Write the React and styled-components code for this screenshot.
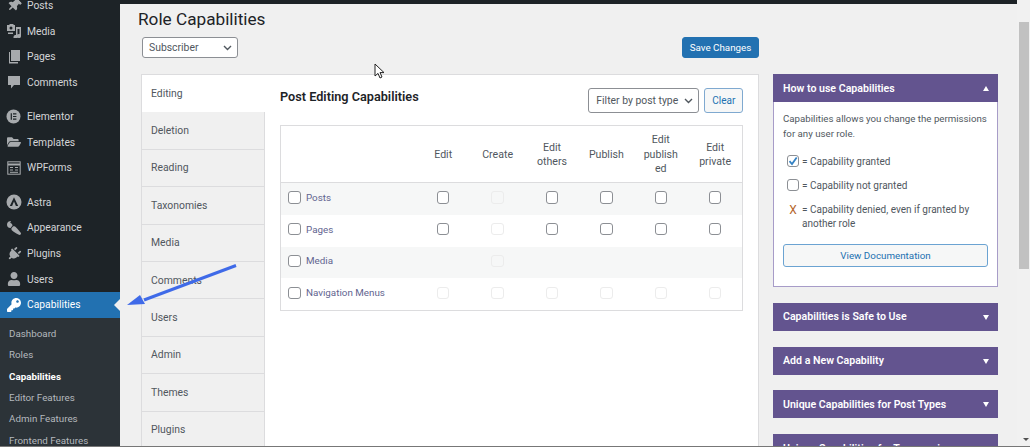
import React from "react";
import styled, { createGlobalStyle } from "styled-components";
import { FaThumbtack, FaFolderOpen, FaPaintBrush, FaPlug, FaUser, FaKey } from "react-icons/fa";

const GlobalStyle = createGlobalStyle`
  html, body {
    margin: 0;
    padding: 0;
    background: #f0f0f0;
    overflow: hidden;
  }
  * {
    box-sizing: border-box;
  }
`;

const MediaIcon = () => (
  <svg width="14" height="14" viewBox="0 0 14 14" fill="currentColor">
    <path d="M0 1h2l1-1h3l1 1h1v6H0z" />
    <circle cx="4" cy="4" r="1.5" fill="#1d2327" />
    <path d="M9 3h5v9a2 2 0 1 1-1.5-1.9V5H10.5v8a2 2 0 1 1-1.5-1.9z" />
    <path d="M1 8.5h5V10H1z" />
  </svg>
);

const PagesIcon = () => (
  <svg width="14" height="14" viewBox="0 0 14 14" fill="currentColor">
    <path d="M4 0h9v11H4z" />
    <path d="M2 2h1v10h8v1.5H2z" />
  </svg>
);

const CommentIcon = () => (
  <svg width="14" height="14" viewBox="0 0 14 14" fill="currentColor">
    <path d="M1 1h12v9H7l-3 3.5V10H1z" />
  </svg>
);

const ElementorIcon = () => (
  <svg width="15" height="15" viewBox="0 0 15 15">
    <circle cx="7.5" cy="7.5" r="7" fill="currentColor" />
    <path d="M4.7 4.3h1.2v6.4H4.7zM7 4.3h3.4v1.2H7zM7 6.9h3.4v1.2H7zM7 9.5h3.4v1.2H7z" fill="#1d2327" />
  </svg>
);

const FormsIcon = () => (
  <svg width="14" height="14" viewBox="0 0 14 14" fill="none" stroke="currentColor">
    <rect x="0.8" y="0.8" width="12.4" height="12.4" />
    <path d="M1 3.5h12" strokeWidth="2" />
    <path d="M3 6.5h3M8 6.5h3M3 9h3M8 9h3M3 11.3h8" />
  </svg>
);

const AstraIcon = () => (
  <svg width="16" height="16" viewBox="0 0 16 16">
    <circle cx="8" cy="8" r="7.5" fill="currentColor" />
    <path d="M8 3.2 12.2 12h-2.3L8 7.6 6.1 12H3.8z" fill="#1d2327" />
  </svg>
);

const menuGroups = [
  [
    { label: "Posts", icon: <FaThumbtack style={{ transform: "rotate(45deg)" }} /> },
    { label: "Media", icon: <MediaIcon /> },
    { label: "Pages", icon: <PagesIcon /> },
    { label: "Comments", icon: <CommentIcon /> },
  ],
  [
    { label: "Elementor", icon: <ElementorIcon /> },
    { label: "Templates", icon: <FaFolderOpen /> },
    { label: "WPForms", icon: <FormsIcon /> },
  ],
  [
    { label: "Astra", icon: <AstraIcon /> },
    { label: "Appearance", icon: <FaPaintBrush style={{ transform: "rotate(90deg)" }} /> },
    { label: "Plugins", icon: <FaPlug style={{ transform: "rotate(45deg)" }} /> },
    { label: "Users", icon: <FaUser /> },
  ],
];

const subItems = ["Dashboard", "Roles", "Capabilities", "Editor Features", "Admin Features", "Frontend Features"];
const tabs = ["Editing", "Deletion", "Reading", "Taxonomies", "Media", "Comments", "Users", "Admin", "Themes", "Plugins"];
const columns = ["Edit", "Create", "Edit others", "Publish", "Edit published", "Edit private"];
const rows = [
  { name: "Posts", cells: [1, 0, 1, 1, 1, 1] },
  { name: "Pages", cells: [1, 0, 1, 1, 1, 1] },
  { name: "Media", cells: [null, 0, null, null, null, null] },
  { name: "Navigation Menus", cells: [0, 0, 0, 0, 0, 0] },
];
const closedBoxes = [
  "Capabilities is Safe to Use",
  "Add a New Capability",
  "Unique Capabilities for Post Types",
  "Unique Capabilities for Taxonomies",
];

const App = () => (
  <>
    <GlobalStyle />
    <Frame>
      <Left>
        <TopBar />
        <Body>
          <Sidebar>
            {menuGroups.map((group, i) => (
              <MenuGroup key={i}>
                {group.map((item) => (
                  <MenuItem key={item.label}>
                    <MenuIcon>{item.icon}</MenuIcon>
                    {item.label}
                  </MenuItem>
                ))}
              </MenuGroup>
            ))}
            <ActiveItem>
              <MenuIcon $active>
                <FaKey />
              </MenuIcon>
              Capabilities
              <Notch />
            </ActiveItem>
            <SubMenu>
              {subItems.map((item) => (
                <SubItem key={item} $current={item === "Capabilities"}>
                  {item}
                </SubItem>
              ))}
            </SubMenu>
          </Sidebar>
          <Content>
            <Title>Role Capabilities</Title>
            <Toolbar>
              <RoleSelect>
                Subscriber
                <Chevron />
              </RoleSelect>
              <SaveButton>Save Changes</SaveButton>
            </Toolbar>
            <Columns>
              <Panel>
                <TabList>
                  {tabs.map((tab) => (
                    <Tab key={tab} $active={tab === "Editing"}>
                      {tab}
                    </Tab>
                  ))}
                </TabList>
                <TabBody>
                  <TabHead>
                    <Heading>Post Editing Capabilities</Heading>
                    <Filter>
                      <FilterSelect>
                        Filter by post type
                        <Chevron />
                      </FilterSelect>
                      <ClearButton>Clear</ClearButton>
                    </Filter>
                  </TabHead>
                  <CapsTable>
                    <thead>
                      <tr>
                        <HeadCell $first />
                        {columns.map((col) => (
                          <HeadCell key={col}>{col}</HeadCell>
                        ))}
                      </tr>
                    </thead>
                    <tbody>
                      {rows.map((row) => (
                        <Row key={row.name}>
                          <NameCell>
                            <NameWrap>
                              <Check />
                              {row.name}
                            </NameWrap>
                          </NameCell>
                          {row.cells.map((cell, i) => (
                            <BoxCell key={i}>{cell !== null && <Check $disabled={!cell} />}</BoxCell>
                          ))}
                        </Row>
                      ))}
                    </tbody>
                  </CapsTable>
                </TabBody>
              </Panel>
              <Aside>
                <Box>
                  <BoxHeader>
                    How to use Capabilities
                    <Caret $up />
                  </BoxHeader>
                  <BoxBody>
                    <Intro>Capabilities allows you change the permissions for any user role.</Intro>
                    <Legend>
                      <LegendMark>
                        <Check>
                          <svg width="10" height="10" viewBox="0 0 10 10" fill="none" stroke="#3582c4" strokeWidth="1.8">
                            <path d="M1.5 5.2 4 8l4.7-6.5" />
                          </svg>
                        </Check>
                      </LegendMark>
                      = Capability granted
                    </Legend>
                    <Legend>
                      <LegendMark>
                        <Check />
                      </LegendMark>
                      = Capability not granted
                    </Legend>
                    <Legend $wrap>
                      <LegendMark>
                        <DeniedMark>X</DeniedMark>
                      </LegendMark>
                      = Capability denied, even if granted by another role
                    </Legend>
                    <DocsButton>View Documentation</DocsButton>
                  </BoxBody>
                </Box>
                {closedBoxes.map((title) => (
                  <BoxHeader key={title} $closed>
                    {title}
                    <Caret />
                  </BoxHeader>
                ))}
              </Aside>
            </Columns>
          </Content>
        </Body>
      </Left>
      <Scrollbar>
        <Thumb />
        <ScrollArrow />
      </Scrollbar>
      <Annotation width="112" height="50" viewBox="0 0 112 50">
        <path d="M109 1.5 17 36" stroke="#3f6ae8" strokeWidth="3" fill="none" />
        <path d="M0 41 13 31l5 9z" fill="#3f6ae8" />
      </Annotation>
      <Cursor width="11" height="16" viewBox="0 0 11 16">
        <path d="M1 1v12l3-2.6L6 15l2-1-2-4.4h4z" fill="#fff" stroke="#222" strokeWidth="1" />
      </Cursor>
    </Frame>
  </>
);

export default App;

const font = `Roboto, "Open Sans", sans-serif`;

const Frame = styled.div`
  position: relative;
  display: flex;
  width: 1030px;
  height: 447px;
  overflow: hidden;
  background: #f0f0f0;
  border-bottom: 1px solid #777;
  font-family: ${font};
  color: #3c434a;
`;

const Left = styled.div`
  display: flex;
  flex-direction: column;
  width: 1017px;
  min-height: 0;
`;

const TopBar = styled.div`
  flex: none;
  height: 4px;
  background: #1d2327;
`;

const Body = styled.div`
  flex: 1;
  display: flex;
  min-height: 0;
`;

const Sidebar = styled.nav`
  flex: none;
  width: 120px;
  margin-top: -11.5px;
  background: #1d2327;
  font-size: 10.3px;
`;

const MenuGroup = styled.div`
  & + & {
    margin-top: 8.5px;
  }
`;

const MenuItem = styled.div`
  display: flex;
  align-items: center;
  height: 25.7px;
  color: #d4d5d7;
`;

const MenuIcon = styled.span`
  display: flex;
  align-items: center;
  justify-content: center;
  width: 27px;
  font-size: 14px;
  color: ${(p) => (p.$active ? "#fff" : "#a7aaad")};
`;

const ActiveItem = styled.div`
  position: relative;
  display: flex;
  align-items: center;
  height: 25.5px;
  background: #2271b1;
  color: #fff;
`;

const Notch = styled.span`
  position: absolute;
  right: 0;
  top: 7px;
  border: 6px solid transparent;
  border-right-color: #f0f0f0;
  border-left-width: 0;
`;

const SubMenu = styled.div`
  height: 200px;
  padding-top: 5.4px;
  background: #2c3338;
`;

const SubItem = styled.div`
  display: flex;
  align-items: center;
  height: 21.3px;
  padding-left: 9px;
  font-size: 9.8px;
  font-weight: ${(p) => (p.$current ? 700 : 400)};
  color: ${(p) => (p.$current ? "#fff" : "#b4b9be")};
`;

const Content = styled.main`
  flex: 1;
  min-width: 0;
  padding: 3px 19px 0 21px;
`;

const Title = styled.h1`
  margin: 0 0 0 -3px;
  height: 30px;
  font-size: 17.2px;
  line-height: 24px;
  font-weight: 400;
  color: #1d2327;
`;

const Toolbar = styled.div`
  display: flex;
  justify-content: space-between;
  width: 618px;
  height: 21px;
  margin-bottom: 16px;
`;

const selectBase = `
  display: flex;
  align-items: center;
  justify-content: space-between;
  background: #fff;
  border: 1px solid #8c8f94;
  border-radius: 3px;
  font-size: 10.4px;
  color: #50575e;
`;

const RoleSelect = styled.div`
  ${selectBase}
  width: 96px;
  margin-left: 1px;
  padding: 0 5px 0 6px;
`;

const Chevron = () => (
  <svg width="9" height="6" viewBox="0 0 9 6" fill="none" stroke="#50575e" strokeWidth="1.4">
    <path d="M1 1l3.5 3.5L8 1" />
  </svg>
);

const SaveButton = styled.button`
  width: 77px;
  padding: 0;
  background: #2271b1;
  border: 1px solid #2271b1;
  border-radius: 3px;
  font-family: ${font};
  font-size: 9.8px;
  color: #fff;
`;

const Columns = styled.div`
  display: flex;
  gap: 14px;
  align-items: flex-start;
`;

const Panel = styled.section`
  display: flex;
  width: 618px;
  background: #fff;
  border: 1px solid #dcdcde;
  border-bottom: 0;
`;

const TabList = styled.div`
  flex: none;
  width: 123px;
`;

const Tab = styled.div`
  display: flex;
  align-items: center;
  height: 37.4px;
  padding-left: 9px;
  font-size: 10.4px;
  color: #50575e;
  background: ${(p) => (p.$active ? "#fff" : "#f0f0f0")};
  border-bottom: 1px solid ${(p) => (p.$active ? "transparent" : "#dcdcde")};
  border-right: 1px solid ${(p) => (p.$active ? "transparent" : "#dcdcde")};
`;

const TabBody = styled.div`
  flex: 1;
  padding: 13px 16px 0 15px;
`;

const TabHead = styled.div`
  display: flex;
  justify-content: space-between;
  align-items: flex-start;
  height: 37px;
`;

const Heading = styled.h2`
  margin: 0;
  font-size: 12.7px;
  line-height: 18px;
  font-weight: 600;
  color: #1d2327;
`;

const Filter = styled.div`
  display: flex;
  gap: 5px;
`;

const FilterSelect = styled.div`
  ${selectBase}
  width: 111px;
  height: 25px;
  padding: 0 5px 0 7px;
`;

const ClearButton = styled.button`
  width: 39px;
  height: 25px;
  padding: 0;
  background: #f6f7f7;
  border: 1px solid #7fa9d0;
  border-radius: 3px;
  font-family: ${font};
  font-size: 10px;
  color: #2271b1;
`;

const CapsTable = styled.table`
  width: 463px;
  table-layout: fixed;
  border-collapse: separate;
  border-spacing: 0;
  border: 1px solid #dcdcde;
`;

const HeadCell = styled.th`
  width: ${(p) => (p.$first ? "135px" : "54.4px")};
  height: 57px;
  padding: 2px 8.5px 0;
  border-bottom: 1px solid #dcdcde;
  font-size: 10.6px;
  line-height: 14.5px;
  font-weight: 400;
  color: #50575e;
  overflow-wrap: anywhere;
`;

const Row = styled.tr`
  height: 31.8px;
  &:nth-child(odd) {
    background: #f6f7f7;
  }
`;

const NameCell = styled.td`
  padding: 0 0 3px 7px;
  font-size: 9.8px;
  color: #62648f;
`;

const NameWrap = styled.div`
  display: flex;
  align-items: center;
  gap: 5.5px;
`;

const BoxCell = styled.td`
  padding: 0 0 3px;
  & > span {
    margin: 0 auto;
  }
`;

const Check = styled.span`
  display: flex;
  align-items: center;
  justify-content: center;
  flex: none;
  width: 12.5px;
  height: 12.5px;
  background: ${(p) => (p.$disabled ? "transparent" : "#fff")};
  border: 1px solid ${(p) => (p.$disabled ? "#ececec" : "#8c8f94")};
  border-radius: 3px;
`;

const Aside = styled.aside`
  flex: none;
  width: 225px;
  display: flex;
  flex-direction: column;
  gap: 15.8px;
`;

const Box = styled.div`
  border: 1px solid #a79cc8;
  border-top: 0;
  background: #fff;
`;

const BoxHeader = styled.div`
  position: relative;
  display: flex;
  align-items: center;
  flex: none;
  height: 28px;
  margin: ${(p) => (p.$closed ? "0" : "0 -1px")};
  padding-left: 10px;
  background: #63548f;
  font-size: 10.6px;
  font-weight: 600;
  color: #fff;
`;

const Caret = styled.span`
  position: absolute;
  right: 9px;
  top: 12px;
  border-left: 3.5px solid transparent;
  border-right: 3.5px solid transparent;
  ${(p) => (p.$up ? "border-bottom: 5px solid #fff;" : "border-top: 5px solid #fff;")}
`;

const BoxBody = styled.div`
  height: 184px;
  padding: 10px 9px 0;
  font-size: 10px;
  line-height: 14.5px;
  color: #50575e;
`;

const Intro = styled.p`
  margin: 0 0 13.5px;
  font-size: 9.7px;
`;

const Legend = styled.div`
  display: flex;
  align-items: flex-start;
  margin-bottom: ${(p) => (p.$wrap ? "12px" : "9.5px")};
`;

const LegendMark = styled.span`
  display: flex;
  justify-content: center;
  flex: none;
  width: 18px;
  margin-left: 1px;
`;

const DeniedMark = styled.span`
  font-size: 12px;
  color: #b5652c;
`;

const DocsButton = styled.button`
  display: block;
  width: 205px;
  height: 23px;
  padding: 0;
  background: #f6f7f7;
  border: 1px solid #6ba3d2;
  border-radius: 3px;
  font-family: ${font};
  font-size: 9.8px;
  color: #2271b1;
`;

const Scrollbar = styled.div`
  position: relative;
  flex: 1;
  padding: 22px 1px 0 2px;
  background: #f1f1f1;
`;

const Thumb = styled.div`
  height: 247px;
  background: #c1c1c1;
`;

const ScrollArrow = styled.span`
  position: absolute;
  bottom: 5px;
  left: 6px;
  border-left: 3px solid transparent;
  border-right: 3px solid transparent;
  border-top: 3.5px solid #505050;
`;

const Annotation = styled.svg`
  position: absolute;
  left: 127px;
  top: 264px;
`;

const Cursor = styled.svg`
  position: absolute;
  left: 374px;
  top: 63px;
`;
